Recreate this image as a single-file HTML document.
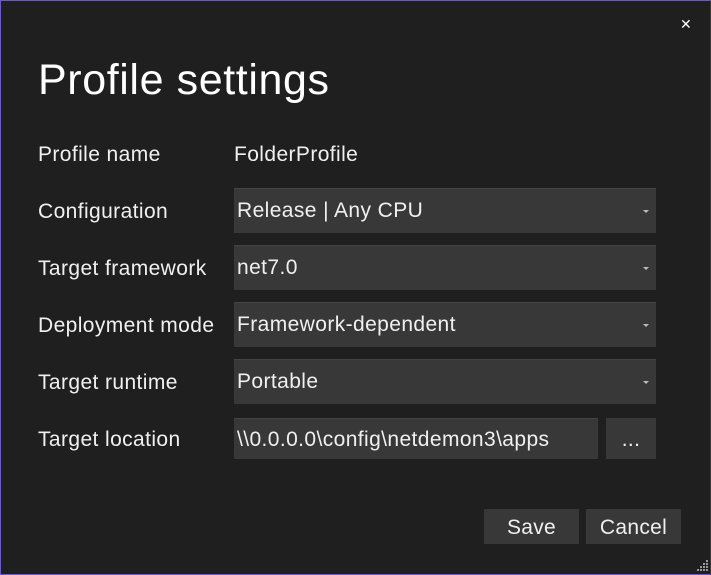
<!DOCTYPE html>
<html><head><style>
*{margin:0;padding:0;box-sizing:border-box}
html,body{width:711px;height:575px;overflow:hidden;background:#1f1f1f}
body{font-family:"Liberation Sans",sans-serif;color:#f0f0f0;position:relative;border:1px solid #6a5acd;border-right-color:#3a3a3a}
.a{position:absolute}
.t{left:37px;top:55px;font-size:43px;font-weight:300;color:#fff;letter-spacing:0.6px}
.x{left:679px;top:15px;font-size:14px;color:#fff}
.l{left:37px;font-size:21px;color:#f0f0f0;letter-spacing:0.4px}
.d{left:233px;width:422px;height:45px;background:#383838;border-top:1px solid #444;font-size:21px;line-height:44px;padding-left:3px;letter-spacing:0.4px}
.d::after{content:"";position:absolute;right:7px;top:21px;border-left:3px solid transparent;border-right:3px solid transparent;border-top:3px solid #bbb}
.b{background:#383838;font-size:21px;text-align:center;letter-spacing:0.3px}
</style></head><body>
<div class="a x">✕</div>
<div class="a t">Profile settings</div>
<div class="a l" style="top:142px">Profile name</div>
<div class="a" style="left:233px;top:142px;font-size:21px;letter-spacing:0.4px">FolderProfile</div>
<div class="a l" style="top:199px">Configuration</div>
<div class="a d" style="top:187px">Release | Any CPU</div>
<div class="a l" style="top:256px">Target framework</div>
<div class="a d" style="top:244px">net7.0</div>
<div class="a l" style="top:313px">Deployment mode</div>
<div class="a d" style="top:301px">Framework-dependent</div>
<div class="a l" style="top:370px">Target runtime</div>
<div class="a d" style="top:358px">Portable</div>
<div class="a l" style="top:427px">Target location</div>
<div class="a" style="left:233px;top:417px;width:364px;height:41px;background:#383838;border-top:1px solid #444;font-size:21px;line-height:42px;padding-left:3px;letter-spacing:0.4px;white-space:nowrap;overflow:hidden">\\0.0.0.0\config\netdemon3\apps</div>
<div class="a b" style="left:605px;top:417px;width:50px;height:41px;line-height:44px">...</div>
<div class="a b" style="left:483px;top:508px;width:95px;height:35px;line-height:37px">Save</div>
<div class="a b" style="left:585px;top:508px;width:95px;height:35px;line-height:37px">Cancel</div>
<svg class="a" style="left:696px;top:559px" width="12" height="12"><g fill="#999"><rect x="9" y="0" width="2" height="2"/><rect x="6" y="3" width="2" height="2"/><rect x="9" y="3" width="2" height="2"/><rect x="3" y="6" width="2" height="2"/><rect x="6" y="6" width="2" height="2"/><rect x="9" y="6" width="2" height="2"/><rect x="0" y="9" width="2" height="2"/><rect x="3" y="9" width="2" height="2"/><rect x="6" y="9" width="2" height="2"/><rect x="9" y="9" width="2" height="2"/></g></svg>
</body></html>
